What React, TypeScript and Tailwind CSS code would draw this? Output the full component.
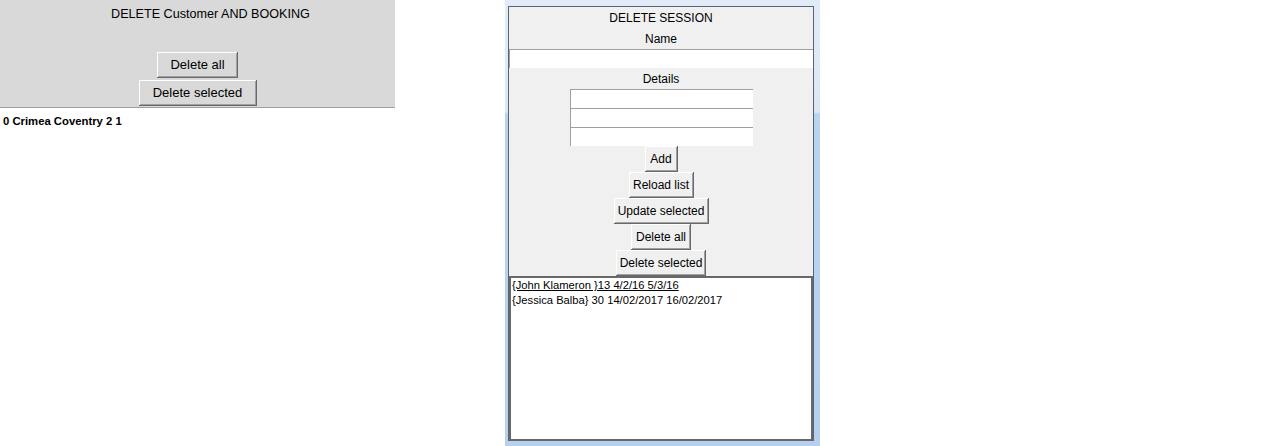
import React from "react";

const raised =
  "shadow-[inset_-1px_-1px_0_#696969,inset_1px_1px_0_#ffffff,inset_-2px_-2px_0_#a0a0a0]";

function TkButton({ label, className = "" }: { label: string; className?: string }) {
  return (
    <button type="button" className={`h-[26px] flex items-center justify-center text-black ${raised} ${className}`}>
      {label}
    </button>
  );
}

function Entry({ className = "" }: { className?: string }) {
  return <div className={`h-[19px] bg-white border-t border-l border-[#a0a0a0] ${className}`} />;
}

export default function App() {
  return (
    <div className="w-[1288px] h-[446px] bg-white flex items-start font-['Liberation_Sans',Arial,sans-serif] text-black overflow-hidden">
      {/* customer / booking window */}
      <div className="w-[395px] flex flex-col">
        <div className="h-[108px] bg-[#d9d9d9] border-b border-[#a0a0a0] flex flex-col items-center">
          <div className="h-[28px] pl-[26px] flex items-center text-[12.6px]">DELETE Customer AND BOOKING</div>
          <div className="h-[24px]" />
          <TkButton label="Delete all" className="w-[81px] bg-[#d9d9d9] text-[13px]" />
          <div className="h-[2px]" />
          <TkButton label="Delete selected" className="w-[118px] bg-[#d9d9d9] text-[13px]" />
        </div>
        <div className="h-[24px] pl-[3px] pt-[2px] flex items-center text-[11.3px] font-bold">0 Crimea Coventry 2 1</div>
      </div>

      {/* session window */}
      <div className="ml-[110px] w-[315px] h-[446px] pl-[3px] pr-[6px] pt-[6px] pb-[5px] bg-[linear-gradient(to_bottom,#e1ecf8_0,#d9e7f5_112px,#b9d4ef_114px,#b6d1ed_100%)]">
        <div className="h-full border-t border-l border-r border-[#5b6270] bg-[#f0f0f0] flex flex-col text-[12px]">
          <div className="h-[21px] flex items-center justify-center">DELETE SESSION</div>
          <div className="h-[21px] flex items-center justify-center">Name</div>
          <Entry />
          <div className="h-[21px] flex items-center justify-center">Details</div>
          <div className="flex flex-col items-center">
            <Entry className="w-[183px]" />
            <Entry className="w-[183px]" />
            <Entry className="w-[183px]" />
            <TkButton label="Add" className="w-[33px] bg-[#f0f0f0]" />
            <TkButton label="Reload list" className="w-[65px] bg-[#f0f0f0]" />
            <TkButton label="Update selected" className="w-[95px] bg-[#f0f0f0]" />
            <TkButton label="Delete all" className="w-[60px] bg-[#f0f0f0]" />
            <TkButton label="Delete selected" className="w-[90px] bg-[#f0f0f0]" />
          </div>
          <div className="flex-1 bg-white border-2 border-[#686868] pl-[1px] text-[11.2px] leading-[15px]">
            <div className="underline">{"{John Klameron }13 4/2/16 5/3/16"}</div>
            <div>{"{Jessica Balba} 30 14/02/2017 16/02/2017"}</div>
          </div>
        </div>
      </div>
    </div>
  );
}
